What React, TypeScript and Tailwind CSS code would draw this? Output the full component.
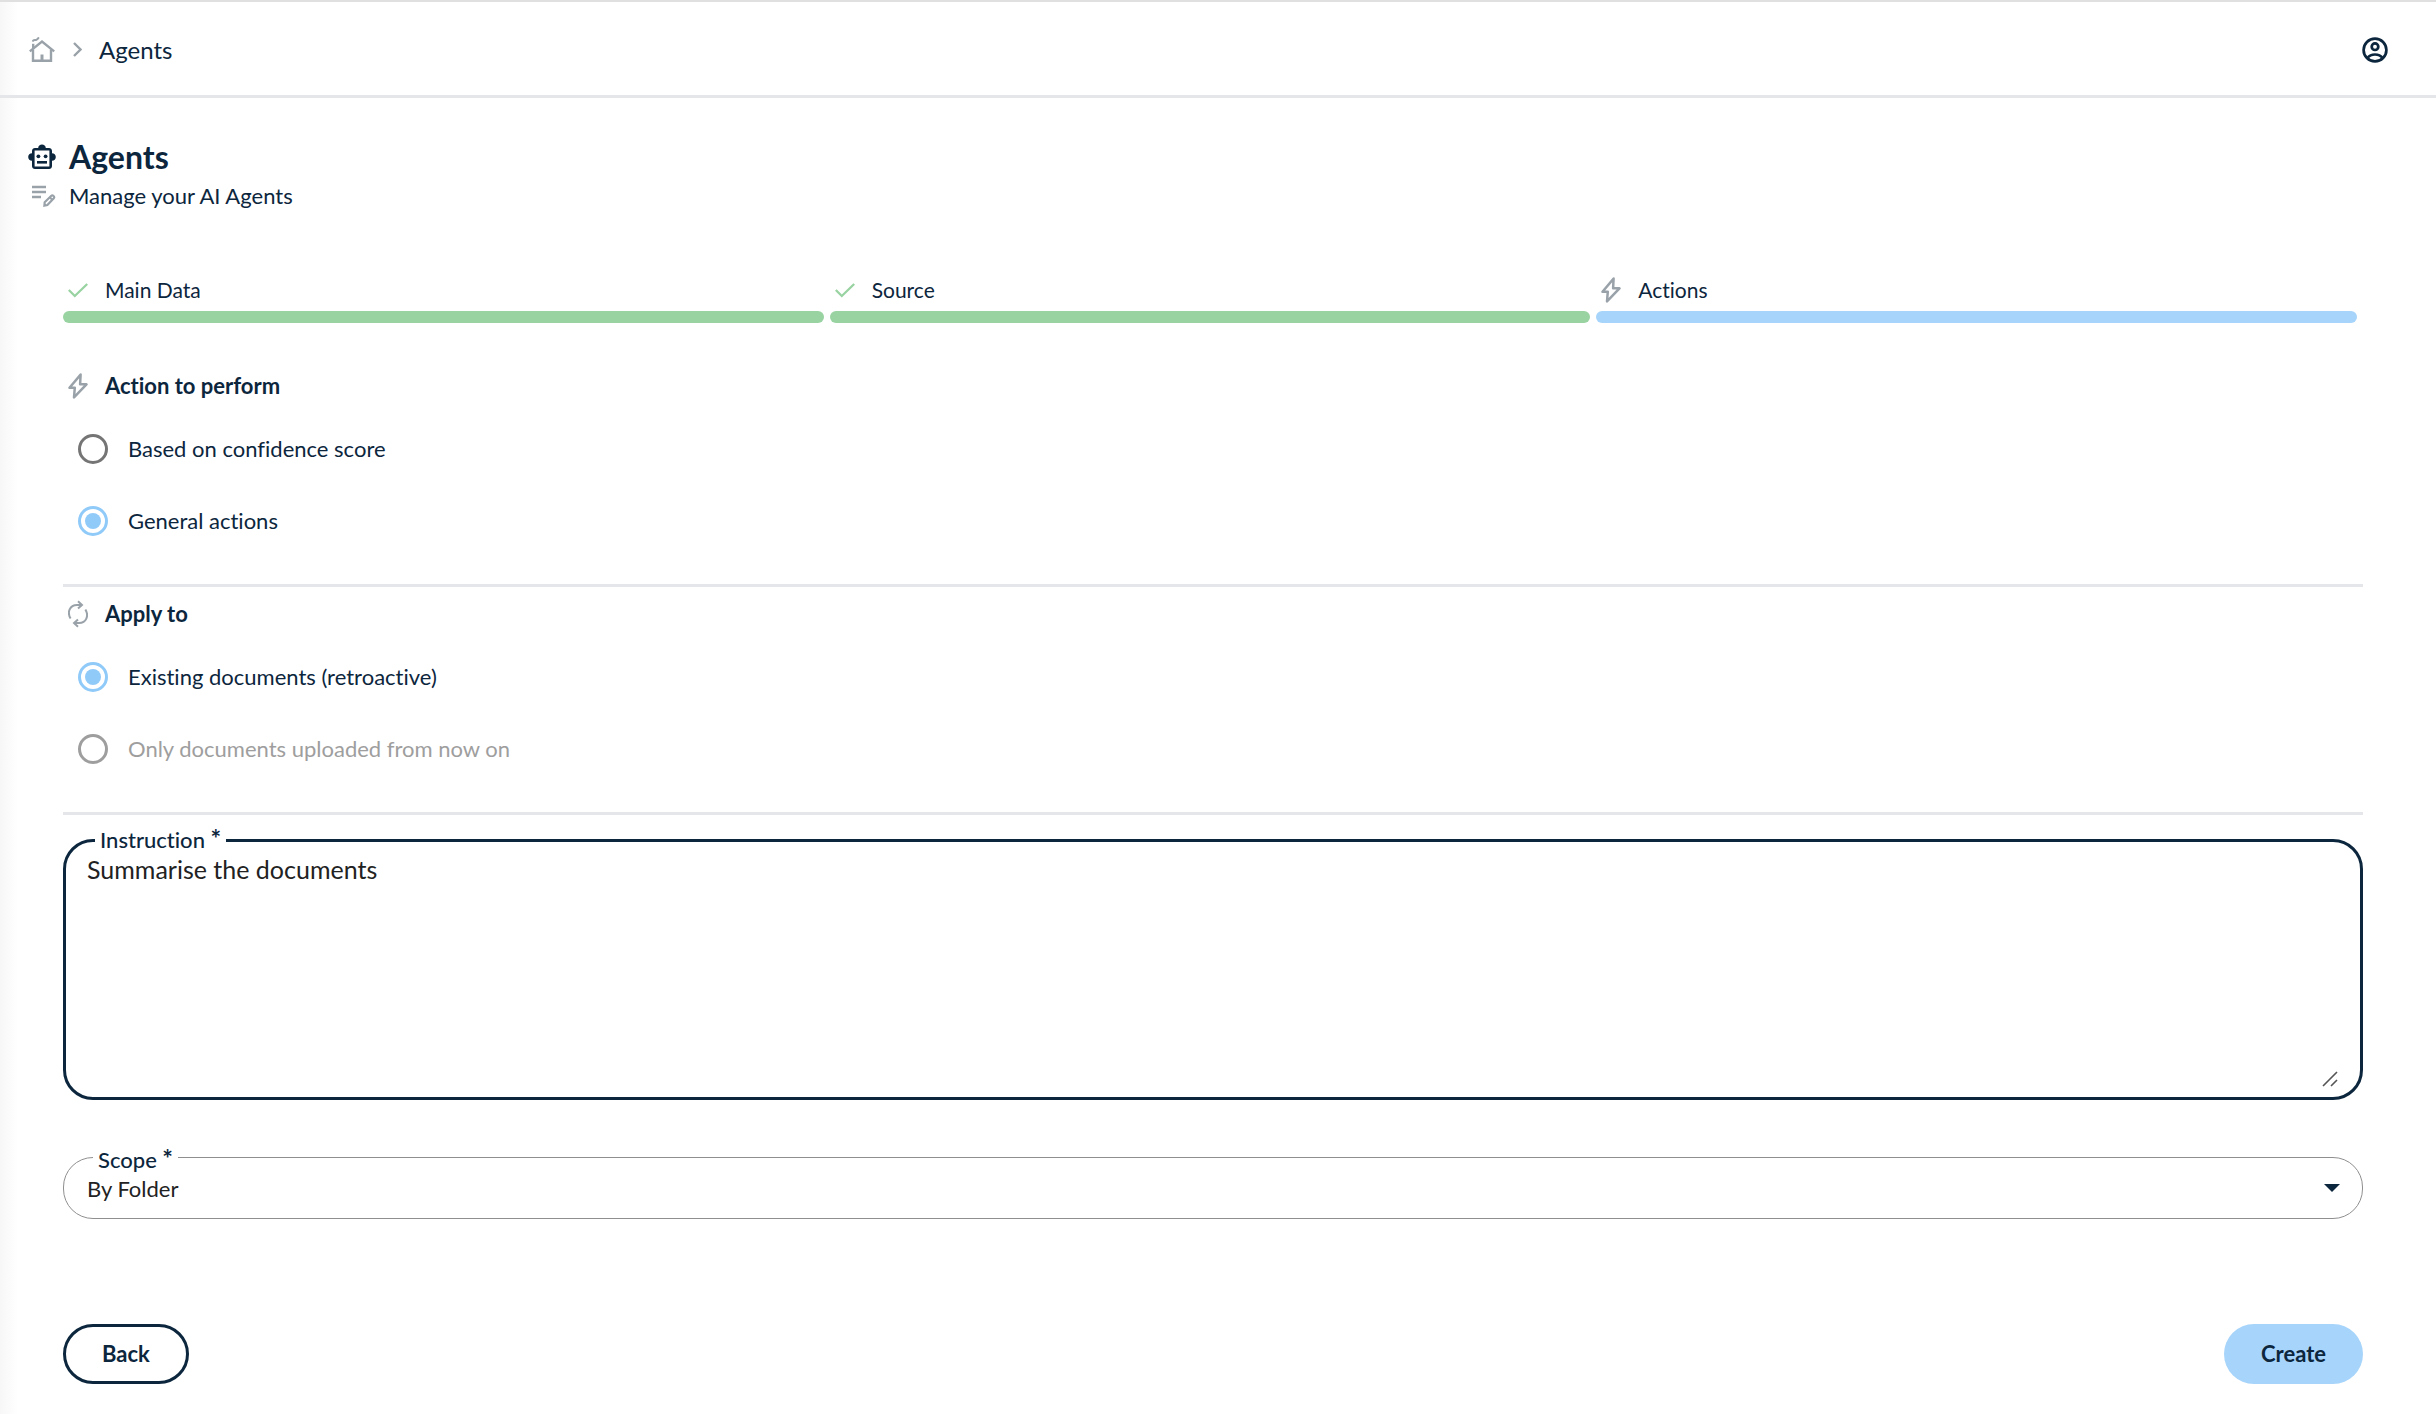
import { useState } from "react";
import type { ReactNode } from "react";

function HomeIcon() {
  return (
    <svg viewBox="0 0 26 26" className="size-[26px] text-[#9aa2a9]" fill="none" stroke="currentColor" strokeWidth="2.400" aria-hidden="true">
      <path d="M.8 14.400 13 4.600l12.200 9.800" />
      <path d="M4 12.500V23.800h18V12.500" />
      <path d="M13 17.500v6" strokeWidth="3" />
      <path d="M4.200 11V6.800" strokeWidth="2.400" />
      <path d="M3.800 4.600C4 2 6.200 3.400 7.400 2.800 8.800 2.200 8.400 1.100 10.200 1" strokeWidth="2" />
    </svg>
  );
}

function ChevronIcon() {
  return (
    <svg viewBox="0 0 9 15" className="h-[15px] w-[9px] text-[#9aa2a9]" fill="none" stroke="currentColor" strokeWidth="2.400" aria-hidden="true">
      <path d="m1 1 6.500 6.500L1 14" />
    </svg>
  );
}

function AccountIcon() {
  return (
    <svg viewBox="0 0 26 26" className="size-[26px]" fill="none" stroke="currentColor" strokeWidth="2.700" aria-hidden="true">
      <circle cx="13" cy="13" r="11.400" />
      <circle cx="13" cy="9.700" r="3.300" />
      <path d="M5.400 21c1.800-2.400 4.600-3.500 7.600-3.500s5.800 1.100 7.600 3.500" />
    </svg>
  );
}

function RobotIcon() {
  return (
    <svg viewBox="0 0 28 26" className="h-[26px] w-7 shrink-0" fill="currentColor" aria-hidden="true">
      <path
        fillRule="evenodd"
        d="M10.200 4C10.200 1.800 12 .5 14 .5s3.800 1.300 3.800 3.500H21c1.700 0 3 1.300 3 3v2.200c2.200 0 3.800 1.700 3.800 3.800S26.200 16.800 24 16.800V22c0 1.700-1.300 3-3 3H7c-1.700 0-3-1.300-3-3v-5.200C1.800 16.800.2 15.200.2 13S1.800 9.200 4 9.200V7c0-1.700 1.300-3 3-3Zm-3.600 2.600v15.800h14.800V6.600Z"
      />
      <circle cx="10.400" cy="12.300" r="1.900" />
      <circle cx="17.600" cy="12.300" r="1.900" />
      <path d="M9 17h10v2.600H9z" />
    </svg>
  );
}

function EditNoteIcon() {
  return (
    <svg viewBox="0 0 24 22" className="h-[22px] w-6 text-[#9aa2a9]" fill="none" stroke="currentColor" strokeWidth="2.400" aria-hidden="true">
      <path d="M0 2h14M0 7h14M0 12h9" />
      <path d="m12.400 20.600.3-3.400 6.600-6.400c1.400-1.200 3.700.9 2.500 2.400l-6.400 6.800z" strokeWidth="2.200" />
      <path d="m17.800 12.300 2.400 2.400" strokeWidth="2" />
    </svg>
  );
}

function CheckIcon() {
  return (
    <svg viewBox="0 0 20 15" className="h-[15px] w-5 text-[#98d3a1]" fill="none" stroke="currentColor" strokeWidth="2.300" aria-hidden="true">
      <path d="m.8 7 6 6L19.200 1" />
    </svg>
  );
}

function BoltIcon() {
  return (
    <svg viewBox="0 0 20 26" className="h-[26px] w-5 text-[#9aa2a9]" fill="none" stroke="currentColor" strokeWidth="2.500" strokeLinejoin="round" aria-hidden="true">
      <path d="M12.600 1.600 1.500 14.700h5.300L6 24.400l12.500-13.100h-6.400z" />
    </svg>
  );
}

function CycleIcon() {
  return (
    <svg viewBox="0 0 20 28" className="h-7 w-5 text-[#9aa2a9]" fill="none" stroke="currentColor" strokeWidth="2" aria-hidden="true">
      <path d="M2.600 18.600C-1.200 12 1.800 5 9 4.900h4.500" />
      <path d="m10 1.200 4 3.700-4 3.700" />
      <path d="M17.400 9.400c3.800 6.600.8 13.600-6.400 13.700H6.500" />
      <path d="m10 19.400-4 3.700 4 3.700" />
    </svg>
  );
}

function Step({ icon, label, bar }: { icon: ReactNode; label: string; bar: string }) {
  return (
    <li className="flex flex-1 flex-col gap-1.5 text-[21px]">
      <span className="flex h-[30px] items-center gap-[17px] pl-[5px]">
        {icon}
        {label}
      </span>
      <span className={`h-3 rounded-full ${bar}`} />
    </li>
  );
}

type Option = { value: string; label: string; disabled?: boolean };

function RadioSection({
  icon,
  title,
  name,
  options,
  initial,
}: {
  icon: ReactNode;
  title: string;
  name: string;
  options: Option[];
  initial: string;
}) {
  const [value, setValue] = useState(initial);
  return (
    <section aria-labelledby={`${name}-title`} className="border-b-3 border-[#e5e6ea] pb-[27px]">
      <h2 id={`${name}-title`} className="mb-3 flex h-[30px] items-center gap-[17px] pl-[5px] font-bold">
        {icon}
        {title}
      </h2>
      <div role="radiogroup" aria-labelledby={`${name}-title`}>
        {options.map((o) => (
          <div key={o.value} className="flex h-[72px] items-center gap-5 pl-[15px]">
            <input
              type="radio"
              id={`${name}-${o.value}`}
              name={name}
              checked={value === o.value}
              disabled={o.disabled}
              onChange={() => setValue(o.value)}
              className="grid size-[30px] appearance-none place-content-center rounded-full border-3 border-[#757575] checked:border-[#90caf9] checked:before:size-4 checked:before:rounded-full checked:before:bg-[#90caf9] checked:before:content-[''] disabled:border-[#9e9e9e]"
            />
            <label htmlFor={`${name}-${o.value}`} className={o.disabled ? "text-[#9e9e9e]" : ""}>
              {o.label}
            </label>
          </div>
        ))}
      </div>
    </section>
  );
}

export default function App() {
  return (
    <div className="min-h-screen bg-[linear-gradient(to_right,#f7f7f7,#ffffff_18px)] font-['Lato',sans-serif] text-[22px] leading-[30px] text-[#0c263d] [font-variant-ligatures:none]">
      <header className="flex h-[98px] items-center justify-between border-t-2 border-b-3 border-t-[#e0e0e0] border-b-[#e5e6ea] pt-0.5 pr-12 pl-[29px]">
        <nav aria-label="Breadcrumb" className="flex items-center text-2xl">
          <a href="#home" aria-label="Home">
            <HomeIcon />
          </a>
          <span className="mr-[17px] ml-[18px]">
            <ChevronIcon />
          </span>
          <a href="#agents">Agents</a>
        </nav>
        <button type="button" aria-label="Account">
          <AccountIcon />
        </button>
      </header>

      <main className="pt-[39px] pr-[73px] pb-[30px] pl-7">
        <div className="flex h-10 items-center gap-[13px]">
          <RobotIcon />
          <h1 className="text-[32px] font-bold">Agents</h1>
        </div>
        <div className="mt-1 flex items-center gap-[13px] pl-1">
          <EditNoteIcon />
          <p>Manage your AI Agents</p>
        </div>

        <form className="mt-[64px] pl-[35px]" onSubmit={(e) => e.preventDefault()}>
          <ol className="mb-12 flex gap-1.5 pr-1.5">
            <Step icon={<CheckIcon />} label="Main Data" bar="bg-[#98d3a1]" />
            <Step icon={<CheckIcon />} label="Source" bar="bg-[#98d3a1]" />
            <Step icon={<BoltIcon />} label="Actions" bar="bg-[#a7d4fa]" />
          </ol>

          <RadioSection
            icon={<BoltIcon />}
            title="Action to perform"
            name="action"
            initial="general"
            options={[
              { value: "confidence", label: "Based on confidence score" },
              { value: "general", label: "General actions" },
            ]}
          />
          <div className="h-3" />
          <RadioSection
            icon={<CycleIcon />}
            title="Apply to"
            name="apply"
            initial="existing"
            options={[
              { value: "existing", label: "Existing documents (retroactive)" },
              { value: "future", label: "Only documents uploaded from now on", disabled: true },
            ]}
          />

          <fieldset className="relative mt-[11px] rounded-[30px] border-3 border-[#0c263d] pr-5 pl-[21px]">
            <legend className="ml-2 px-[5px] leading-7 font-medium">
              <label htmlFor="instruction">
                Instruction <b className="text-[25px] leading-none">*</b>
              </label>
            </legend>
            <textarea
              id="instruction"
              defaultValue="Summarise the documents"
              className="block h-[243px] w-full resize-none text-[25px] leading-[30px] text-[#222222] outline-none"
            />
            <svg viewBox="0 0 16 16" className="pointer-events-none absolute right-[22px] bottom-2.5 size-4" fill="none" stroke="#555555" strokeWidth="1.600" aria-hidden="true">
              <path d="M1 15 15 1M9 15l6-6" />
            </svg>
          </fieldset>

          <fieldset className="relative mt-[40px] rounded-[30px] border border-[#8f8f8f] pr-5 pl-[23px]">
            <legend className="ml-1.5 px-[5px] pt-1.5 leading-7 font-medium">
              <label htmlFor="scope">
                Scope <b className="text-[25px] leading-none">*</b>
              </label>
            </legend>
            <select id="scope" className="mb-3.5 block h-[30px] w-full appearance-none text-[#222222] outline-none">
              <option>By Folder</option>
            </select>
            <svg viewBox="0 0 16 8" className="pointer-events-none absolute right-[22px] bottom-[26px] h-2 w-4" fill="currentColor" aria-hidden="true">
              <path d="M0 0h16L8 8z" />
            </svg>
          </fieldset>

          <div className="mt-[105px] flex justify-between font-bold">
            <button type="button" className="h-[60px] rounded-[30px] border-3 border-[#0c263d] px-9">
              Back
            </button>
            <button type="submit" className="h-[60px] rounded-[30px] bg-[#a7d4fa] px-[37px]">
              Create
            </button>
          </div>
        </form>
      </main>
    </div>
  );
}
